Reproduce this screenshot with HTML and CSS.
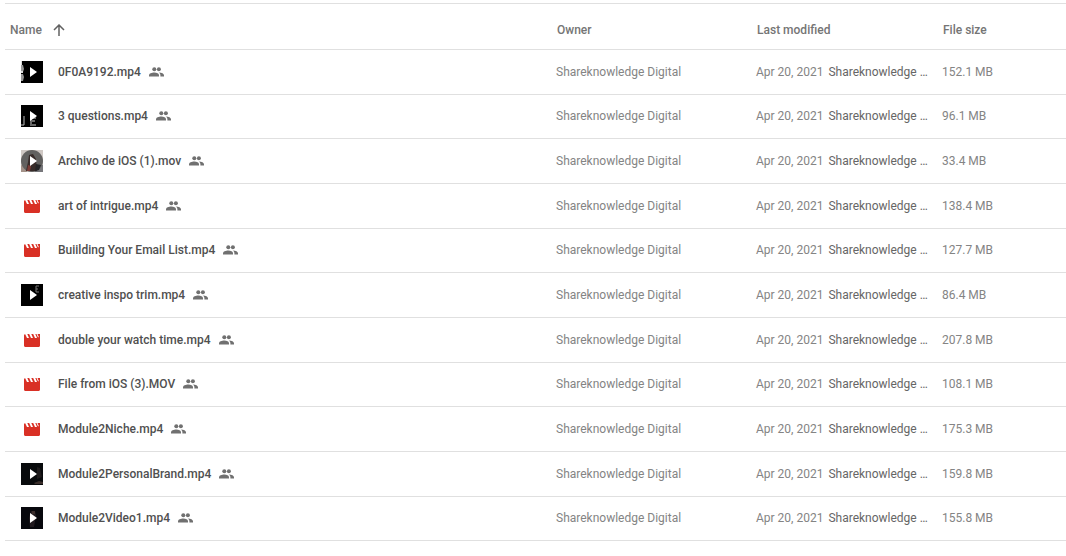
FILE: index.html
```html
<!DOCTYPE html>
<html lang="en">
<head>
    <meta charset="UTF-8">
    <meta name="viewport" content="width=device-width, initial-scale=1.0">
    <title>Shared videos</title>
    <link rel="stylesheet" href="styles.css">
</head>
<body>
    <!-- Icons and thumbnails used by the rows -->
    <svg class="sprites" aria-hidden="true">
        <symbol id="people" viewBox="0 0 16 10">
            <circle cx="5.300" cy="2.300" r="2"/>
            <circle cx="9.900" cy="2.300" r="2"/>
            <path d="M0 9.500V8.200C0 6.300 2.800 5.400 5.300 5.400s4.700.9 4.700 2.800v1.300z"/>
            <path d="M9.800 5.400c3 0 5.200 1.100 5.200 2.800v1.300h-3.600V8.200c0-1.200-.6-2.100-1.600-2.800z"/>
        </symbol>
        <symbol id="movie" viewBox="0 0 16 13">
            <path d="M0 1.500C0 .6.600.200 1.200.200L3 4h2L3.300 0h1.900L7 4h2L7.300 0h1.900L11 4h2l-1.700-4H16v11.500c0 .9-.6 1.500-1.500 1.500h-13C.6 13 0 12.400 0 11.500z"/>
            <path d="M13 0l1.400 3.200" fill="none" stroke="#fff"/>
        </symbol>
        <symbol id="play" viewBox="0 0 22 22">
            <path d="M9 6v10l7-5z" fill="#fff"/>
        </symbol>
        <symbol id="thumb-numbers" viewBox="0 0 22 22">
            <rect width="22" height="22"/>
            <path d="M0 4h2l1 4-1 3H0zM0 13h2l1 3-1 4H0z" fill="#999"/>
            <path d="M0 0h1v4H0zM0 10h2v2H0z" fill="#ddd"/>
            <use href="#play"/>
        </symbol>
        <symbol id="thumb-questions" viewBox="0 0 22 22">
            <rect width="22" height="22"/>
            <path d="M3 11v9H0" fill="none" stroke="#bbb"/>
            <path d="M15 13h-5v7h5M10 16h4" fill="none" stroke="#666" stroke-width="2"/>
            <use href="#play"/>
        </symbol>
        <symbol id="thumb-archivo" viewBox="0 0 22 22">
            <rect width="22" height="22" fill="#cfc8c4"/>
            <path d="M0 15l5 2 1 5H0z" fill="#a39289"/>
            <path d="M15 15h7v7h-8z" fill="#77777b"/>
            <circle cx="11" cy="11" r="11" fill="#626160"/>
            <path d="M8 5l4-1 3 5 1 12H5l2-9z" fill="#372b29"/>
            <path d="M7 15l3 1-1 5H6z" fill="#7c3d38"/>
            <path d="M15 14l5 1-2 5-4 1z" fill="#242426"/>
            <use href="#play"/>
        </symbol>
        <symbol id="thumb-creative" viewBox="0 0 22 22">
            <rect width="22" height="22"/>
            <path d="M18 2h-3v6h3M15 5h2" fill="none" stroke="#777"/>
            <use href="#play"/>
        </symbol>
        <symbol id="thumb-brand" viewBox="0 0 22 22">
            <rect width="22" height="22" fill="#080a0c"/>
            <path d="M16 4l3 1 2 9-5 2z" fill="#1d1a1b"/>
            <path d="M13 20l5-2 4 1v2h-8z" fill="#3a2e2b"/>
            <use href="#play"/>
        </symbol>
        <symbol id="thumb-video" viewBox="0 0 22 22">
            <rect width="22" height="22" fill="#07080d"/>
            <path d="M10 4h4l1 5-2 11H9l-1-9z" fill="#211b20"/>
            <path d="M11 4h3v3h-3z" fill="#3b2e2d"/>
            <use href="#play"/>
        </symbol>
    </svg>

    <table class="files">
        <colgroup>
            <col>
            <col class="col-owner">
            <col class="col-modified">
            <col class="col-size">
        </colgroup>
        <thead>
            <tr>
                <th aria-sort="ascending">
                    <button type="button" class="sort">
                        Name
                        <svg class="arrow" viewBox="0 0 12 12" aria-hidden="true"><path d="M6 12V1M1 6l5-5 5 5"/></svg>
                    </button>
                </th>
                <th>Owner</th>
                <th>Last modified</th>
                <th>File size</th>
            </tr>
        </thead>
        <tbody>
            <tr>
                <td><div class="name"><svg class="thumb"><use href="#thumb-numbers"/></svg><span>0F0A9192.mp4</span><svg class="people"><use href="#people"/></svg></div></td>
                <td>Shareknowledge Digital</td>
                <td><div class="modified">Apr 20, 2021 <span class="by">Shareknowledge …</span></div></td>
                <td>152.1 MB</td>
            </tr>
            <tr>
                <td><div class="name"><svg class="thumb"><use href="#thumb-questions"/></svg><span>3 questions.mp4</span><svg class="people"><use href="#people"/></svg></div></td>
                <td>Shareknowledge Digital</td>
                <td><div class="modified">Apr 20, 2021 <span class="by">Shareknowledge …</span></div></td>
                <td>96.1 MB</td>
            </tr>
            <tr>
                <td><div class="name"><svg class="thumb"><use href="#thumb-archivo"/></svg><span>Archivo de iOS (1).mov</span><svg class="people"><use href="#people"/></svg></div></td>
                <td>Shareknowledge Digital</td>
                <td><div class="modified">Apr 20, 2021 <span class="by">Shareknowledge …</span></div></td>
                <td>33.4 MB</td>
            </tr>
            <tr>
                <td><div class="name"><svg class="movie"><use href="#movie"/></svg><span>art of intrigue.mp4</span><svg class="people"><use href="#people"/></svg></div></td>
                <td>Shareknowledge Digital</td>
                <td><div class="modified">Apr 20, 2021 <span class="by">Shareknowledge …</span></div></td>
                <td>138.4 MB</td>
            </tr>
            <tr>
                <td><div class="name"><svg class="movie"><use href="#movie"/></svg><span>Buiilding Your Email List.mp4</span><svg class="people"><use href="#people"/></svg></div></td>
                <td>Shareknowledge Digital</td>
                <td><div class="modified">Apr 20, 2021 <span class="by">Shareknowledge …</span></div></td>
                <td>127.7 MB</td>
            </tr>
            <tr>
                <td><div class="name"><svg class="thumb"><use href="#thumb-creative"/></svg><span>creative inspo trim.mp4</span><svg class="people"><use href="#people"/></svg></div></td>
                <td>Shareknowledge Digital</td>
                <td><div class="modified">Apr 20, 2021 <span class="by">Shareknowledge …</span></div></td>
                <td>86.4 MB</td>
            </tr>
            <tr>
                <td><div class="name"><svg class="movie"><use href="#movie"/></svg><span>double your watch time.mp4</span><svg class="people"><use href="#people"/></svg></div></td>
                <td>Shareknowledge Digital</td>
                <td><div class="modified">Apr 20, 2021 <span class="by">Shareknowledge …</span></div></td>
                <td>207.8 MB</td>
            </tr>
            <tr>
                <td><div class="name"><svg class="movie"><use href="#movie"/></svg><span>File from iOS (3).MOV</span><svg class="people"><use href="#people"/></svg></div></td>
                <td>Shareknowledge Digital</td>
                <td><div class="modified">Apr 20, 2021 <span class="by">Shareknowledge …</span></div></td>
                <td>108.1 MB</td>
            </tr>
            <tr>
                <td><div class="name"><svg class="movie"><use href="#movie"/></svg><span>Module2Niche.mp4</span><svg class="people"><use href="#people"/></svg></div></td>
                <td>Shareknowledge Digital</td>
                <td><div class="modified">Apr 20, 2021 <span class="by">Shareknowledge …</span></div></td>
                <td>175.3 MB</td>
            </tr>
            <tr>
                <td><div class="name"><svg class="thumb"><use href="#thumb-brand"/></svg><span>Module2PersonalBrand.mp4</span><svg class="people"><use href="#people"/></svg></div></td>
                <td>Shareknowledge Digital</td>
                <td><div class="modified">Apr 20, 2021 <span class="by">Shareknowledge …</span></div></td>
                <td>159.8 MB</td>
            </tr>
            <tr>
                <td><div class="name"><svg class="thumb"><use href="#thumb-video"/></svg><span>Module2Video1.mp4</span><svg class="people"><use href="#people"/></svg></div></td>
                <td>Shareknowledge Digital</td>
                <td><div class="modified">Apr 20, 2021 <span class="by">Shareknowledge …</span></div></td>
                <td>155.8 MB</td>
            </tr>
        </tbody>
    </table>
</body>
</html>
```
FILE: styles.css
```css
* {
    box-sizing: border-box;
}
body {
    margin: 0;
    padding: 3px 0 0 5px;
    background-color: #fff;
    color: #848484;
    font-family: Roboto, Arial, sans-serif;
    font-size: 12px;
    line-height: 16px;
}
.sprites {
    position: absolute;
    width: 0;
    height: 0;
}
.files {
    width: 100%;
    table-layout: fixed;
    border-spacing: 0;
    border-top: 1px solid #e0e0e0;
}
.col-owner {
    width: 200px;
}
.col-modified {
    width: 186px;
}
.col-size {
    width: 124px;
}
th,
td {
    height: 45px;
    padding: 0;
    border-bottom: 1px solid #e0e0e0;
    text-align: left;
    vertical-align: middle;
    white-space: nowrap;
}
td {
    padding-bottom: 1px;
}
tbody tr:nth-child(3n+2) td {
    height: 44px;
}
th {
    height: 46px;
    padding-top: 7px;
    padding-left: 1px;
    color: #757575;
    font-weight: 500;
}
th:first-child {
    padding-left: 5px;
}
.sort {
    display: flex;
    align-items: center;
    gap: 11px;
    padding: 0;
    border: none;
    background: none;
    color: inherit;
    font: inherit;
    cursor: pointer;
}
.arrow {
    width: 12px;
    height: 12px;
    fill: none;
    stroke: #616161;
    stroke-width: 1.5;
}
.name {
    display: flex;
    align-items: center;
    padding-left: 16px;
    color: #505050;
    font-weight: 500;
}
.thumb {
    width: 22px;
    height: 22px;
    margin-right: 15px;
}
.movie {
    width: 16px;
    height: 13px;
    margin: 1px 18px 0 3px;
    fill: #d93025;
}
.people {
    width: 16px;
    height: 10px;
    margin-left: 8px;
    fill: #707070;
}
.modified {
    display: flex;
    gap: 5px;
}
.by {
    color: #666;
}
```
